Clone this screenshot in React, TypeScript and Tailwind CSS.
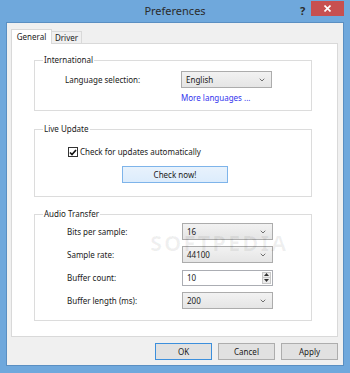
import { ChevronDown } from "lucide-react";

const font = "font-['Noto_Sans','Open_Sans',sans-serif]";

function Select({ value }: { value: string }) {
  return (
    <div className="flex h-[17px] w-[91px] items-center justify-between border border-[#acacac] bg-gradient-to-b from-[#f2f2f2] to-[#e5e5e5] pl-[4px] pr-[5px] text-[#1a1a1a]">
      <span>{value}</span>
      <ChevronDown aria-hidden="true" size={8} strokeWidth={2.5} className="text-[#555]" />
    </div>
  );
}

function Spin({ value }: { value: string }) {
  return (
    <div className="flex h-[16px] w-[91px] items-center justify-between border border-[#abadb3] bg-white pl-[4px] text-[#1a1a1a]">
      <span>{value}</span>
      <div className="mr-[1px] flex h-[12px] w-[9px] flex-col border border-[#c8c8c8] bg-[#ececec] text-[#333]">
        <div className="flex flex-1 items-center justify-center">
          <svg width="5" height="3" viewBox="0 0 5 3"><path d="M0 3 L2.5 0 L5 3 Z" fill="currentColor" /></svg>
        </div>
        <div className="flex flex-1 items-center justify-center border-t border-[#c8c8c8]">
          <svg width="5" height="3" viewBox="0 0 5 3"><path d="M0 0 L2.5 3 L5 0 Z" fill="currentColor" /></svg>
        </div>
      </div>
    </div>
  );
}

function Group({ title, className, children }: { title: string; className?: string; children: React.ReactNode }) {
  return (
    <fieldset className={`border border-[#dcdcdc] ${className ?? ""}`}>
      <legend className="ml-[8px] px-[1px] leading-[12px] text-[#1a1a1a]">{title}</legend>
      {children}
    </fieldset>
  );
}

function DialogButton({ label, primary }: { label: string; primary?: boolean }) {
  return (
    <button
      type="button"
      className={`h-[17px] w-[57px] border ${primary ? "border-[#3c8fdc]" : "border-[#adadad]"} bg-[#e1e1e1] text-[#1a1a1a]`}
    >
      {label}
    </button>
  );
}

export default function App() {
  return (
    <div className={`relative flex h-[373px] w-[350px] flex-col bg-[#6fa8dc] text-[8px] ${font}`}>
      <div className="relative flex h-[22px] shrink-0 items-center justify-center">
        <span className="text-[11px] text-[#2b2b2b]">Preferences</span>
        <span className="absolute left-[300px] top-[3px] text-[11px] font-bold text-[#2b2b2b]">?</span>
        <div className="absolute left-[311px] top-[1px] flex h-[15px] w-[33px] items-center justify-center bg-[#c75050]">
          <svg width="7" height="7" viewBox="0 0 7 7">
            <path d="M0.5 0.5 L6.5 6.5 M6.5 0.5 L0.5 6.5" stroke="white" strokeWidth="1.6" />
          </svg>
        </div>
      </div>

      <div className="mx-[6px] mb-[7px] flex flex-1 flex-col border border-[#5a8fc2] bg-[#f0f0f0] pl-[4px] pr-[5px] pt-[6px]">
        <div className="flex items-end">
          <div className="relative z-10 -mb-px flex h-[15px] w-[41px] items-center justify-center border border-b-0 border-[#d9d9d9] bg-white text-[#1a1a1a]">
            General
          </div>
          <div className="-ml-px flex h-[12px] w-[31px] items-center justify-center border border-b-0 border-[#d9d9d9] bg-[#f0f0f0] text-[#1a1a1a]">
            Driver
          </div>
        </div>

        <div className="flex h-[294px] flex-col border border-[#d9d9d9] bg-white pl-[22px] pr-[25px] pt-[10px]">
          <Group title="International" className="h-[57px]">
            <div className="grid grid-cols-[116px_91px] items-center gap-y-[4px] pl-[30px] pt-[5px]">
              <span className="text-[#1a1a1a]">Language selection:</span>
              <Select value="English" />
              <span />
              <span className="text-[#3333ee]">More languages ...</span>
            </div>
          </Group>

          <Group title="Live Update" className="mt-[12px] h-[74px]">
            <div className="flex flex-col pt-[11px]">
              <label className="flex items-center gap-[2px] pl-[33px] text-[#1a1a1a]">
                <span className="flex h-[10px] w-[10px] items-center justify-center border border-[#333] bg-white">
                  <svg width="8" height="7" viewBox="0 0 8 7">
                    <path d="M1 3.5 L3 5.5 L7 1" stroke="#111" strokeWidth="1.7" fill="none" />
                  </svg>
                </span>
                Check for updates automatically
              </label>
              <button
                type="button"
                className="ml-[87px] mt-[8px] h-[17px] w-[106px] border border-[#7eb4ea] bg-gradient-to-b from-[#e8f2fc] to-[#dcecfc] text-[#1a1a1a]"
              >
                Check now!
              </button>
            </div>
          </Group>

          <Group title="Audio Transfer" className="mt-[11px] h-[113px]">
            <div className="grid grid-cols-[115px_91px] items-center gap-y-[6px] pl-[32px] pt-[3px]">
              <span className="text-[#1a1a1a]">Bits per sample:</span>
              <Select value="16" />
              <span className="text-[#1a1a1a]">Sample rate:</span>
              <Select value="44100" />
              <span className="text-[#1a1a1a]">Buffer count:</span>
              <div className="flex h-[17px] items-center">
                <Spin value="10" />
              </div>
              <span className="text-[#1a1a1a]">Buffer length (ms):</span>
              <Select value="200" />
            </div>
          </Group>
        </div>

        <div className="mt-[6px] flex justify-end gap-[6px]">
          <DialogButton label="OK" primary />
          <DialogButton label="Cancel" />
          <DialogButton label="Apply" />
        </div>
      </div>

      <div className="pointer-events-none absolute left-[150px] top-[226px] select-none text-[22px] font-bold tracking-[2px] text-[#000]/[0.06]">
        SOFTPEDIA
      </div>
    </div>
  );
}
